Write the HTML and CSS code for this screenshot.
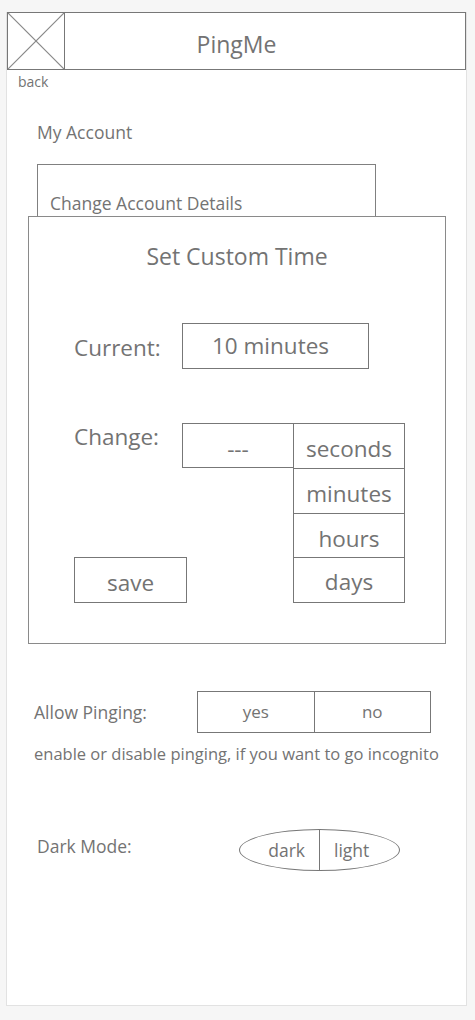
FILE: index.html
```html
<!DOCTYPE html>
<html>
<head>
<meta charset="utf-8">
<title>PingMe</title>
<link rel="stylesheet" href="styles.css">
</head>
<body>
<div class="panel">
  <header class="header">
    <div class="back-icon">
      <svg width="56" height="56" viewBox="0 0 56 56"><line x1="0" y1="0" x2="56" y2="56"/><line x1="56" y1="0" x2="0" y2="56"/></svg>
    </div>
    <div class="title">PingMe</div>
  </header>
  <div class="back">back</div>
  <div class="section-title">My Account</div>
  <div class="account-box"><span>Change Account Details</span></div>
  <div class="modal">
    <div class="modal-title">Set Custom Time</div>
    <div class="row-current">
      <div class="label">Current:</div>
      <div class="current-box">10 minutes</div>
    </div>
    <div class="change-grid">
      <div class="label change-label">Change:</div>
      <div class="dash-box">---</div>
      <div class="units">
        <div class="unit">seconds</div>
        <div class="unit">minutes</div>
        <div class="unit">hours</div>
        <div class="unit">days</div>
      </div>
      <div class="save">save</div>
    </div>
  </div>
  <div class="allow-row">
    <div class="allow-label">Allow Pinging:</div>
    <div class="seg">
      <div class="seg-item">yes</div>
      <div class="seg-item">no</div>
    </div>
  </div>
  <div class="desc">enable or disable pinging, if you want to go incognito</div>
  <div class="dark-row">
    <div class="dark-label">Dark Mode:</div>
    <div class="toggle">
      <div class="toggle-item toggle-dark">dark</div>
      <div class="toggle-item toggle-light">light</div>
    </div>
  </div>
</div>
</body>
</html>
```
FILE: styles.css
```css
* { box-sizing: border-box; }
html, body { margin: 0; padding: 0; }
body {
  background: #f6f6f6;
  font-family: "Open Sans", "Noto Sans", sans-serif;
  color: #737373;
}
.panel {
  margin: 12px 0 0 6px;
  width: 461px;
  height: 994px;
  background: #fff;
  border: 1px solid #e2e2e2;
  border-top: none;
}
.header {
  display: flex;
  height: 58px;
  width: 459px;
  border: 1px solid #777;
}
.back-icon {
  width: 57px;
  flex: none;
  border-right: 1px solid #777;
}
.back-icon svg { display: block; }
.back-icon line { stroke: #888; stroke-width: 1.2; }
.title {
  flex: 1;
  text-align: center;
  font-size: 23px;
  line-height: 56px;
  padding: 3px 57px 0 0;
}
.back {
  font-size: 14px;
  line-height: 16px;
  padding-left: 11px;
  margin-top: 4px;
}
.section-title {
  font-size: 17.5px;
  line-height: 22px;
  padding-left: 30px;
  margin-top: 31px;
}
.account-box {
  margin: 21px 0 0 30px;
  width: 339px;
  height: 52px;
  border: 1px solid #808080;
  border-bottom: none;
  font-size: 17.5px;
  padding: 27px 0 0 12px;
  line-height: 22px;
}
.modal {
  margin-left: 21px;
  width: 418px;
  height: 428px;
  border: 1px solid #8a8a8a;
  background: #fff;
  padding-left: 45px;
  position: relative;
}
.modal-title {
  text-align: center;
  font-size: 23px;
  line-height: 30px;
  margin: 24px 0 0 -45px;
}
.label {
  font-size: 22.5px;
  line-height: 30px;
}
.row-current {
  display: flex;
  align-items: center;
  margin-top: 52px;
}
.row-current .label { width: 108px; margin-top: 3px; }
.current-box {
  width: 187px;
  height: 46px;
  border: 1px solid #777;
  text-align: center;
  font-size: 22.5px;
  line-height: 44px;
  padding-right: 10px;
}
.change-grid {
  display: grid;
  grid-template-columns: 108px 111px 112px;
  grid-template-rows: 45px 44px 45px 46px;
  margin-top: 54px;
}
.change-label {
  grid-row: 1;
  grid-column: 1;
  margin-top: -1px;
}
.dash-box {
  grid-row: 1;
  grid-column: 2;
  border: 1px solid #777;
  border-right: none;
  text-align: center;
  font-size: 22.5px;
  line-height: 50px;
}
.units {
  grid-row: 1 / 5;
  grid-column: 3;
  border: 1px solid #777;
  display: flex;
  flex-direction: column;
}
.unit {
  flex: 1;
  border-bottom: 1px solid #777;
  text-align: center;
  font-size: 22.5px;
  line-height: 50px;
  overflow: hidden;
}
.unit:last-child { border-bottom: none; line-height: 48px; }
.save {
  grid-row: 4;
  grid-column: 1 / 3;
  width: 113px;
  border: 1px solid #777;
  text-align: center;
  font-size: 22.5px;
  line-height: 50px;
}
.allow-row {
  display: flex;
  align-items: center;
  margin-top: 47px;
  padding-left: 27px;
}
.allow-label {
  width: 163px;
  font-size: 17.5px;
  line-height: 22px;
}
.seg {
  display: flex;
  width: 234px;
  height: 42px;
  border: 1px solid #777;
}
.seg-item {
  flex: 1;
  text-align: center;
  font-size: 17px;
  line-height: 40px;
}
.seg-item + .seg-item { border-left: 1px solid #777; }
.desc {
  font-size: 16.5px;
  line-height: 22px;
  padding-left: 27px;
  margin-top: 10px;
}
.dark-row {
  display: flex;
  align-items: flex-start;
  margin-top: 64px;
  padding-left: 30px;
}
.dark-label {
  width: 202px;
  font-size: 17.5px;
  line-height: 22px;
  margin-top: 6px;
}
.toggle {
  display: flex;
  width: 161px;
  height: 42px;
  border: 1px solid #777;
  border-radius: 50%;
}
.toggle-item {
  flex: 1;
  font-size: 17.5px;
  line-height: 40px;
}
.toggle-dark { text-align: right; padding-right: 14px; }
.toggle-light { text-align: left; padding-left: 14px; border-left: 1px solid #777; }
```
